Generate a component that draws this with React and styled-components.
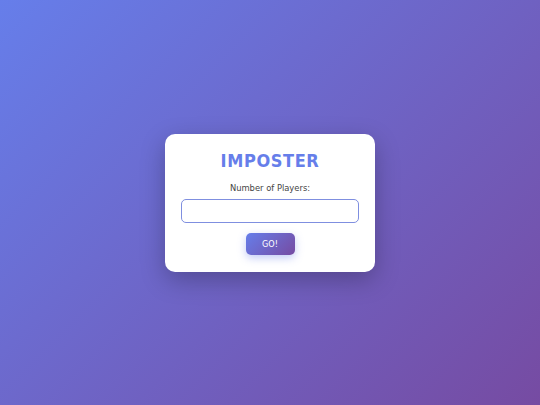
import React from "react";
import styled, { createGlobalStyle } from "styled-components";

const GlobalStyle = createGlobalStyle`
  html, body {
    margin: 0;
    padding: 0;
    height: 100%;
  }
  body {
    font-family: "DejaVu Sans Condensed", "DejaVu Sans", Verdana, sans-serif;
  }
  #root {
    height: 100%;
  }
`;

const Page = styled.div`
  min-height: 100vh;
  display: flex;
  align-items: center;
  justify-content: center;
  background: linear-gradient(135deg, #667eea 0%, #764ba2 100%);
`;

const Card = styled.div`
  width: 210px;
  height: 138px;
  box-sizing: border-box;
  background: #ffffff;
  border-radius: 10px;
  padding: 15px 16px 15px;
  box-shadow: 0 8px 24px rgba(0, 0, 0, 0.25);
  display: flex;
  flex-direction: column;
  align-items: center;
`;

const Title = styled.h1`
  margin: 0 0 9px;
  font-size: 18px;
  line-height: 24px;
  font-weight: bold;
  letter-spacing: 0.6px;
  color: #667eea;
`;

const Label = styled.label`
  font-size: 9.3px;
  line-height: 12px;
  color: #444;
  margin-bottom: 5px;
`;

const Input = styled.input`
  width: 100%;
  box-sizing: border-box;
  height: 24px;
  border: 1px solid #7f8fe0;
  border-radius: 5px;
  outline: none;
  margin: 0 0 10px;
`;

const Button = styled.button`
  width: 49px;
  height: 22px;
  padding: 0;
  border: none;
  border-radius: 5px;
  color: #fff;
  font-family: inherit;
  font-size: 9px;
  background: linear-gradient(135deg, #667eea 0%, #764ba2 100%);
  box-shadow: 0 3px 8px rgba(102, 126, 234, 0.4);
`;

export default function App() {
  return (
    <>
      <GlobalStyle />
      <Page>
        <Card>
          <Title>IMPOSTER</Title>
          <Label>Number of Players:</Label>
          <Input type="number" />
          <Button>GO!</Button>
        </Card>
      </Page>
    </>
  );
}
